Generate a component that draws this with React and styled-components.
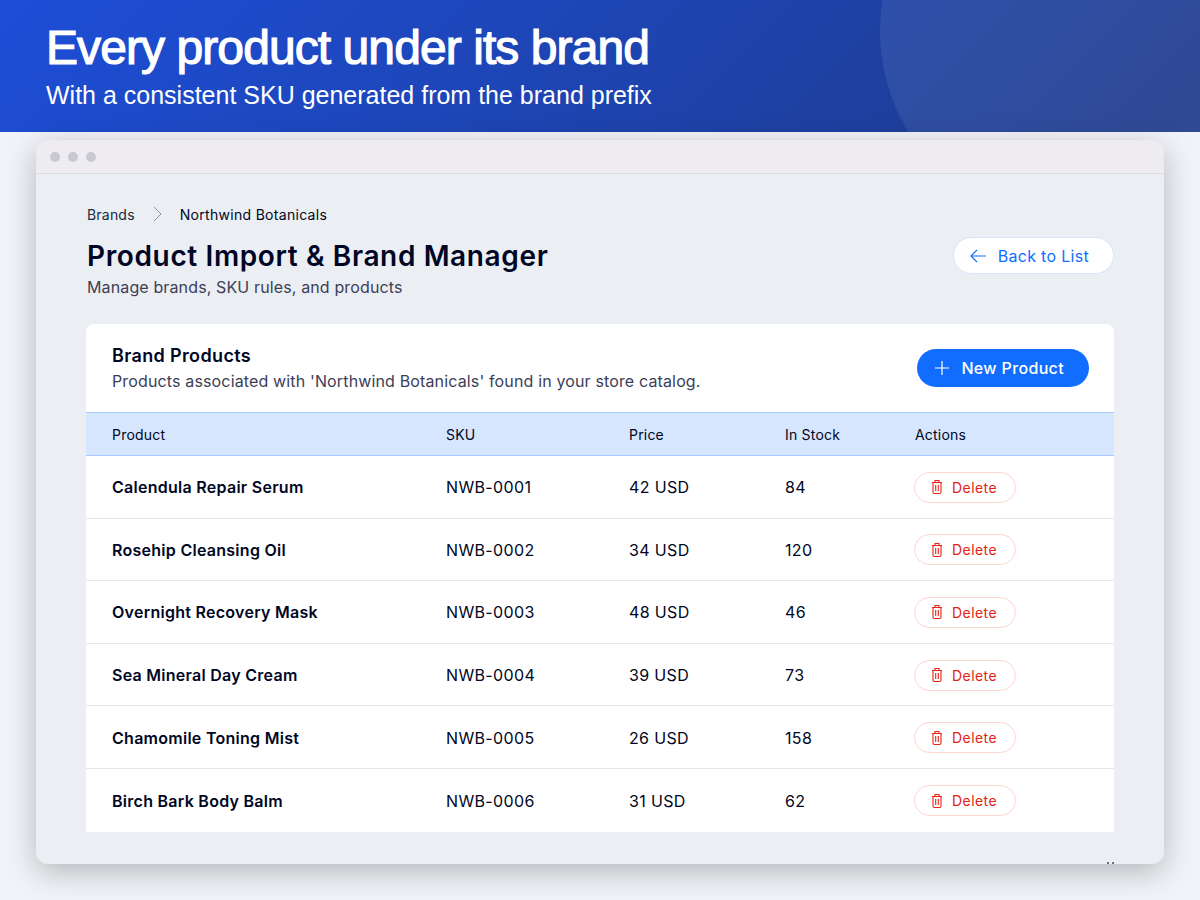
import React from 'react';
import styled, { createGlobalStyle } from 'styled-components';

const GlobalStyle = createGlobalStyle`
  html, body {
    margin: 0;
    padding: 0;
    height: 900px;
    overflow: hidden;
    background: #f1f3f8;
    font-family: Inter, "Noto Sans", sans-serif;
  }
`;

const Page = styled.div`
  width: 1200px;
  height: 900px;
  overflow: hidden;
`;

const Banner = styled.header`
  position: relative;
  height: 132px;
  box-sizing: border-box;
  padding: 22px 46px 0;
  overflow: hidden;
  background: linear-gradient(135deg, #1d4ed8 0%, #1e3a8a 100%);
  color: #fff;
  font-family: "Liberation Sans", Arial, sans-serif;
`;

const Circle = styled.div`
  position: absolute;
  top: -170px;
  right: -80px;
  width: 400px;
  height: 400px;
  border-radius: 50%;
  background: rgba(255, 255, 255, 0.08);
`;

const Headline = styled.h1`
  margin: 0;
  font-size: 48px;
  line-height: 52px;
  font-weight: 400;
  letter-spacing: -0.92px;
  -webkit-text-stroke: 1.2px #fff;
`;

const Subline = styled.p`
  margin: 4px 0 0;
  font-size: 25px;
  line-height: 34px;
`;

const Window = styled.section`
  position: relative;
  margin: 8px 36px 0;
  height: 724px;
  border-radius: 12px;
  background: #ebeef3;
  box-shadow: 0 8px 30px rgba(0, 0, 0, 0.25);
`;

const TitleBar = styled.div`
  display: flex;
  align-items: center;
  gap: 8px;
  height: 33px;
  padding: 0 14px;
  border-radius: 12px 12px 0 0;
  background: #eeecf0;
  border-bottom: 1px solid #dcdee3;
`;

const Dot = styled.span`
  width: 10px;
  height: 10px;
  border-radius: 50%;
  background: #c8c8d0;
`;

const Content = styled.div`
  padding: 30px 50px 0;
`;

const Crumbs = styled.nav`
  display: flex;
  align-items: center;
  gap: 18px;
  padding-left: 1px;
  height: 20px;
  font-size: 14px;
  letter-spacing: 0.2px;
  color: #162d3d;
`;

const CrumbCurrent = styled.span`
  color: #000624;
  letter-spacing: 0.3px;
`;

const TitleRow = styled.div`
  display: flex;
  justify-content: space-between;
  align-items: flex-start;
  margin-top: 14px;
  padding-left: 1px;
`;

const Title = styled.h2`
  margin: 0;
  font-size: 28px;
  line-height: 36px;
  font-weight: 600;
  letter-spacing: 0.63px;
  color: #000624;
`;

const Subtitle = styled.p`
  margin: 1px 0 0;
  font-size: 16px;
  line-height: 24px;
  letter-spacing: 0.13px;
  color: #3b4057;
`;

const BackButton = styled.button`
  display: flex;
  align-items: center;
  gap: 11px;
  height: 37px;
  margin-top: -1px;
  padding: 0 24px 0 15px;
  border: 1px solid #d6e6fe;
  border-radius: 19px;
  background: #fff;
  color: #116dff;
  font: 400 16px Inter, sans-serif;
  letter-spacing: 0.3px;
`;

const Card = styled.div`
  margin-top: 25px;
  background: #fff;
  border-radius: 8px 8px 0 0;
  height: 508px;
  overflow: hidden;
`;

const CardHead = styled.div`
  display: flex;
  justify-content: space-between;
  align-items: center;
  height: 88px;
  box-sizing: border-box;
  padding: 0 25px 0 26px;
`;

const CardTitle = styled.h3`
  margin: 0;
  font-size: 18px;
  line-height: 24px;
  font-weight: 600;
  letter-spacing: 0.35px;
  color: #000624;
`;

const CardText = styled.p`
  margin: 1px 0 0;
  font-size: 16px;
  line-height: 24px;
  letter-spacing: 0.145px;
  color: #3b4057;
`;

const PrimaryButton = styled.button`
  display: flex;
  align-items: center;
  gap: 10px;
  height: 38px;
  padding: 0 25px 0 16px;
  border: 0;
  border-radius: 19px;
  background: #116dff;
  color: #fff;
  font: 500 16px Inter, sans-serif;
  letter-spacing: 0.35px;
`;

const Columns = styled.div`
  display: grid;
  grid-template-columns: 334px 183px 156px 130px 1fr;
  align-items: center;
  box-sizing: border-box;
  padding-left: 26px;
`;

const HeadRow = styled(Columns)`
  height: 44px;
  background: #d6e6fe;
  border-top: 1px solid #a8caff;
  border-bottom: 1px solid #a8caff;
  font-size: 14px;
  letter-spacing: 0.2px;
  color: #000624;
`;

const Row = styled(Columns)`
  height: 62.6px;
  padding-top: 1px;
  border-bottom: 1px solid #e5e7eb;
  font-size: 16px;
  letter-spacing: 0.35px;
  color: #000624;

  &:last-child {
    border-bottom: 0;
  }
`;

const Name = styled.span`
  font-weight: 600;
  letter-spacing: 0.27px;
`;

const DeleteButton = styled.button`
  display: flex;
  align-items: center;
  gap: 8px;
  width: 102px;
  height: 31px;
  margin-left: -1px;
  padding: 0 0 0 15px;
  border: 1px solid #fdd5d0;
  border-radius: 16px;
  background: #fff;
  color: #e62214;
  font: 400 14px Inter, sans-serif;
  letter-spacing: 0.45px;
`;

const StrayMark = styled.span`
  position: absolute;
  bottom: 0;
  width: 2px;
  height: 2px;
  left: ${({ $left }) => $left}px;
  background: #6a7088;
`;

const products = [
  ['Calendula Repair Serum', 'NWB-0001', '42 USD', 84],
  ['Rosehip Cleansing Oil', 'NWB-0002', '34 USD', 120],
  ['Overnight Recovery Mask', 'NWB-0003', '48 USD', 46],
  ['Sea Mineral Day Cream', 'NWB-0004', '39 USD', 73],
  ['Chamomile Toning Mist', 'NWB-0005', '26 USD', 158],
  ['Birch Bark Body Balm', 'NWB-0006', '31 USD', 62],
];

const Chevron = () => (
  <svg width="9" height="16" viewBox="0 0 9 16" fill="none" stroke="#8d92a6" strokeWidth="1">
    <path d="M1 1l7 7-7 7" />
  </svg>
);

const ArrowLeft = () => (
  <svg width="18" height="18" viewBox="0 0 18 18" fill="none" stroke="#116dff" strokeWidth="1.1">
    <path d="M17 9H2M8 3L2 9l6 6" />
  </svg>
);

const Plus = () => (
  <svg width="18" height="18" viewBox="0 0 18 18" fill="none" stroke="#fff" strokeWidth="1.2">
    <path d="M9 2v14M2 9h14" />
  </svg>
);

const Trash = () => (
  <svg width="14" height="16" viewBox="0 0 14 16" fill="none" stroke="#e62214" strokeWidth="1.1">
    <path d="M2 3.5h10M5 3.5V1.5h4v2M3 3.5v9.5a1.5 1.5 0 0 0 1.5 1.5h5A1.5 1.5 0 0 0 11 13V3.5M5.7 6v6M8.3 6v6" />
  </svg>
);

export default function App() {
  return (
    <Page>
      <GlobalStyle />
      <Banner>
        <Circle />
        <Headline>Every product under its brand</Headline>
        <Subline>With a consistent SKU generated from the brand prefix</Subline>
      </Banner>
      <Window>
        <TitleBar>
          <Dot />
          <Dot />
          <Dot />
        </TitleBar>
        <Content>
          <Crumbs>
            <span>Brands</span>
            <Chevron />
            <CrumbCurrent>Northwind Botanicals</CrumbCurrent>
          </Crumbs>
          <TitleRow>
            <div>
              <Title>Product Import &amp; Brand Manager</Title>
              <Subtitle>Manage brands, SKU rules, and products</Subtitle>
            </div>
            <BackButton>
              <ArrowLeft />
              Back to List
            </BackButton>
          </TitleRow>
          <Card>
            <CardHead>
              <div>
                <CardTitle>Brand Products</CardTitle>
                <CardText>Products associated with 'Northwind Botanicals' found in your store catalog.</CardText>
              </div>
              <PrimaryButton>
                <Plus />
                New Product
              </PrimaryButton>
            </CardHead>
            <HeadRow>
              <span>Product</span>
              <span>SKU</span>
              <span>Price</span>
              <span>In Stock</span>
              <span>Actions</span>
            </HeadRow>
            {products.map(([name, sku, price, stock]) => (
              <Row key={sku}>
                <Name>{name}</Name>
                <span>{sku}</span>
                <span>{price}</span>
                <span>{stock}</span>
                <DeleteButton>
                  <Trash />
                  Delete
                </DeleteButton>
              </Row>
            ))}
          </Card>
        </Content>
        <StrayMark $left={1071} />
        <StrayMark $left={1076} />
      </Window>
    </Page>
  );
}
